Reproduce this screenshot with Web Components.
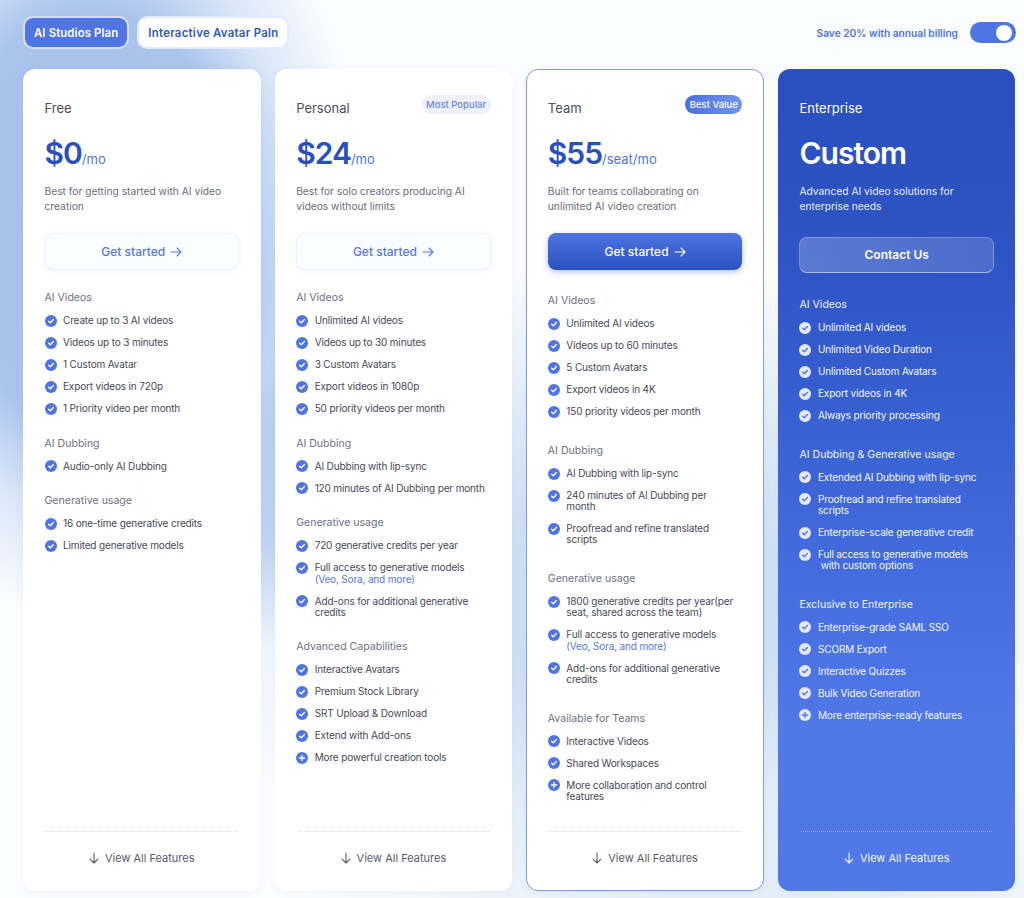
<!DOCTYPE html>
<html lang="en">
<head>
<meta charset="utf-8">
<title>Pricing</title>
<style>
html, body { margin: 0; padding: 0; height: 898px; overflow: hidden; }
body {
  font-family: "Inter", "Liberation Sans", sans-serif;
  background-color: #fbfcfe;
  background-image:
    radial-gradient(ellipse 275px 400px at 90px 220px, #a6c1eb 0%, #a9c3ec 52%, rgba(200,218,245,.65) 74%, rgba(251,252,254,0) 100%),
    radial-gradient(ellipse 130px 230px at 270px 420px, #adc6ec 0%, rgba(173,198,236,.7) 55%, rgba(251,252,254,0) 100%),
    radial-gradient(ellipse 430px 340px at 630px 600px, #c9dcf2 0%, #cfe0f3 35%, rgba(251,252,254,0) 100%),
    radial-gradient(ellipse 500px 120px at 800px 898px, #e6eff8 0%, rgba(251,252,254,0) 100%);
}
</style>
</head>
<body>
<pricing-page>
  <plan-tabs slot="header">
    <plan-tab active>AI Studios Plan</plan-tab>
    <plan-tab>Interactive Avatar Paln</plan-tab>
  </plan-tabs>
  <billing-toggle slot="header">Save 20% with annual billing</billing-toggle>

  <plan-card name="Free" price="$0" unit="/mo" cta="Get started">
    <span slot="desc">Best for getting started with AI video creation</span>
    <feature-group title="AI Videos">
      <feature-item>Create up to 3 AI videos</feature-item>
      <feature-item>Videos up to 3 minutes</feature-item>
      <feature-item>1 Custom Avatar</feature-item>
      <feature-item>Export videos in 720p</feature-item>
      <feature-item>1 Priority video per month</feature-item>
    </feature-group>
    <feature-group title="AI Dubbing">
      <feature-item>Audio-only AI Dubbing</feature-item>
    </feature-group>
    <feature-group title="Generative usage">
      <feature-item>16 one-time generative credits</feature-item>
      <feature-item>Limited generative models</feature-item>
    </feature-group>
  </plan-card>

  <plan-card name="Personal" price="$24" unit="/mo" cta="Get started" badge="Most Popular">
    <span slot="desc">Best for solo creators producing AI videos without limits</span>
    <feature-group title="AI Videos">
      <feature-item>Unlimited AI videos</feature-item>
      <feature-item>Videos up to 30 minutes</feature-item>
      <feature-item>3 Custom Avatars</feature-item>
      <feature-item>Export videos in 1080p</feature-item>
      <feature-item>50 priority videos per month</feature-item>
    </feature-group>
    <feature-group title="AI Dubbing">
      <feature-item>AI Dubbing with lip-sync</feature-item>
      <feature-item>120 minutes of AI Dubbing per month</feature-item>
    </feature-group>
    <feature-group title="Generative usage">
      <feature-item>720 generative credits per year</feature-item>
      <feature-item>Full access to generative models<br><plan-note>(Veo, Sora, and more)</plan-note></feature-item>
      <feature-item>Add-ons for additional generative<br>credits</feature-item>
    </feature-group>
    <feature-group title="Advanced Capabilities">
      <feature-item>Interactive Avatars</feature-item>
      <feature-item>Premium Stock Library</feature-item>
      <feature-item>SRT Upload &amp; Download</feature-item>
      <feature-item>Extend with Add-ons</feature-item>
      <feature-item icon="plus">More powerful creation tools</feature-item>
    </feature-group>
  </plan-card>

  <plan-card tone="team" name="Team" price="$55" unit="/seat/mo" cta="Get started" badge="Best Value">
    <span slot="desc">Built for teams collaborating on unlimited AI video creation</span>
    <feature-group title="AI Videos">
      <feature-item>Unlimited AI videos</feature-item>
      <feature-item>Videos up to 60 minutes</feature-item>
      <feature-item>5 Custom Avatars</feature-item>
      <feature-item>Export videos in 4K</feature-item>
      <feature-item>150 priority videos per month</feature-item>
    </feature-group>
    <feature-group title="AI Dubbing">
      <feature-item>AI Dubbing with lip-sync</feature-item>
      <feature-item>240 minutes of AI Dubbing per<br>month</feature-item>
      <feature-item>Proofread and refine translated<br>scripts</feature-item>
    </feature-group>
    <feature-group title="Generative usage">
      <feature-item>1800 generative credits per year(per<br>seat, shared across the team)</feature-item>
      <feature-item>Full access to generative models<br><plan-note>(Veo, Sora, and more)</plan-note></feature-item>
      <feature-item>Add-ons for additional generative<br>credits</feature-item>
    </feature-group>
    <feature-group title="Available for Teams">
      <feature-item>Interactive Videos</feature-item>
      <feature-item>Shared Workspaces</feature-item>
      <feature-item icon="plus">More collaboration and control<br>features</feature-item>
    </feature-group>
  </plan-card>

  <plan-card tone="enterprise" name="Enterprise" price="Custom" cta="Contact Us">
    <span slot="desc">Advanced AI video solutions for enterprise needs</span>
    <feature-group title="AI Videos">
      <feature-item>Unlimited AI videos</feature-item>
      <feature-item>Unlimited Video Duration</feature-item>
      <feature-item>Unlimited Custom Avatars</feature-item>
      <feature-item>Export videos in 4K</feature-item>
      <feature-item>Always priority processing</feature-item>
    </feature-group>
    <feature-group title="AI Dubbing &amp; Generative usage">
      <feature-item>Extended AI Dubbing with lip-sync</feature-item>
      <feature-item>Proofread and refine translated<br>scripts</feature-item>
      <feature-item>Enterprise-scale generative credit</feature-item>
      <feature-item>Full access to generative models<br>&nbsp;with custom options</feature-item>
    </feature-group>
    <feature-group title="Exclusive to Enterprise">
      <feature-item>Enterprise-grade SAML SSO</feature-item>
      <feature-item>SCORM Export</feature-item>
      <feature-item>Interactive Quizzes</feature-item>
      <feature-item>Bulk Video Generation</feature-item>
      <feature-item icon="plus">More enterprise-ready features</feature-item>
    </feature-group>
  </plan-card>
</pricing-page>

<script>
const ARROW_RIGHT = '<svg width="12" height="12" viewBox="0 0 12 12" fill="none" stroke="currentColor" stroke-width="1.1" stroke-linecap="round" stroke-linejoin="round"><path d="M1 6h10M7 2l4 4-4 4"/></svg>';
const ARROW_DOWN = '<svg width="10" height="12" viewBox="0 0 10 12" fill="none" stroke="currentColor" stroke-width="1.1" stroke-linecap="round" stroke-linejoin="round"><path d="M5 1v10M1.2 7.2 5 11l3.8-3.8"/></svg>';

class PricingPage extends HTMLElement {
  constructor() {
    super();
    this.attachShadow({ mode: 'open' }).innerHTML = `
      <style>
        :host { display: block; padding: 16px 8px 0 23px; }
        header { display: flex; justify-content: space-between; align-items: flex-start; height: 33px; margin-bottom: 20px; }
        main { display: grid; grid-template-columns: repeat(4, 237.5px); column-gap: 14.17px; height: 822px; }
      </style>
      <header><slot name="header"></slot></header>
      <main><slot></slot></main>`;
  }
}

class PlanTabs extends HTMLElement {
  constructor() {
    super();
    this.attachShadow({ mode: 'open' }).innerHTML = `
      <style>:host { display: flex; gap: 8px; }</style><slot></slot>`;
  }
}

class PlanTab extends HTMLElement {
  constructor() {
    super();
    this.attachShadow({ mode: 'open' }).innerHTML = `
      <style>
        :host {
          display: flex; align-items: center; height: 29px; padding: 0 9px; border: 2px solid #e2e9fb;
          border-radius: 10px; background: #fff; color: #2f56c8;
          font-size: 11.3px; font-weight: 600; letter-spacing: .32px; white-space: nowrap;
        }
        :host([active]) { background: #4f75e5; background-clip: padding-box; color: #fff; border-color: #d5e0f8; letter-spacing: .15px; }
      </style><slot></slot>`;
  }
}

class BillingToggle extends HTMLElement {
  constructor() {
    super();
    this.attachShadow({ mode: 'open' }).innerHTML = `
      <style>
        :host { display: flex; align-items: center; gap: 12px; height: 21px; margin-top: 6px; color: #4f75e5; font-size: 10.2px; font-weight: 600; white-space: nowrap; }
        .track { width: 46px; height: 21px; border-radius: 11px; background: #4f75e5; display: flex; align-items: center; justify-content: flex-end; padding-right: 4px; box-sizing: border-box; }
        .knob { width: 16px; height: 16px; border-radius: 50%; background: #fff; }
      </style>
      <span><slot></slot></span><div class="track"><div class="knob"></div></div>`;
  }
}

class PlanCard extends HTMLElement {
  constructor() {
    super();
    const a = n => this.getAttribute(n) || '';
    const isContact = a('tone') === 'enterprise';
    this.attachShadow({ mode: 'open' }).innerHTML = `
      <style>
        :host {
          --group-gap: 22.25px;
          display: flex; flex-direction: column; box-sizing: border-box; height: 822px;
          padding: 30px 21.5px 0; border-radius: 12px; background: #fff; color: #484858;
          box-shadow: 0 2px 10px rgba(60,90,170,.05);
        }
        :host([tone=team]) { --group-gap: 26.4px; padding: 29px 20.5px 0; border: 1px solid #7f9cec; }
        :host([tone=enterprise]) {
          --group-gap: 26px; --title: #eef2fd; --text: #f3f6ff; --desc: #e6ecfc; --name: #fff;
          --price: #fff; --icon-bg: #e3e9fb; --icon-fg: #4f75e5; --line: #8ea7ee;
          background: linear-gradient(180deg, #2a4fbe 0%, #2f55c6 25%, #456de0 62%, #5078e7 80%, #5078e7 100%);
          color: #fff;
        }
        .top { display: flex; justify-content: space-between; align-items: flex-start; height: 18px; }
        .name { font-size: 13px; line-height: 18px; color: var(--name, #4d4d5e); }
        .badge {
          margin-top: -4px; padding: 0 4.5px; height: 19px; line-height: 19px; border-radius: 10px;
          background: #f0f0fb; color: #6a87e8; font-size: 9.5px; font-weight: 500; white-space: nowrap;
        }
        :host([tone=team]) .badge { background: linear-gradient(90deg, #4a70e2, #7394ec); color: #fff; }
        .price { display: flex; align-items: baseline; height: 40px; line-height: 40px; margin-top: 16px; color: var(--price, #2a50c0); font-size: 30px; font-weight: 600; letter-spacing: -1px; }
        .unit { font-size: 13px; font-weight: 400; color: #4f75e5; letter-spacing: 0; }
        .desc { margin-top: 11px; font-size: 10.25px; line-height: 15px; height: 30px; color: var(--desc, #6b6b7c); }
        .cta {
          display: flex; align-items: center; justify-content: center; gap: 5px; box-sizing: border-box;
          height: 37px; margin-top: 19px; border-radius: 8px; border: 1px solid #f1f3fa; background: #fbfcff;
          color: #5478e8; font-size: 12px; font-weight: 500;
          box-shadow: 0 1px 4px rgba(80,110,200,.08);
        }
        :host([tone=team]) .cta {
          border: 0; background: linear-gradient(180deg, #4e74e2, #2c51c0); color: #fff;
          box-shadow: 0 2px 6px rgba(50,85,195,.35);
        }
        :host([tone=enterprise]) .cta {
          height: 36px; margin-top: 23px; padding-bottom: 1px; color: #fff; font-weight: 600;
          background: linear-gradient(90deg, rgba(255,255,255,.22), rgba(255,255,255,.14));
          border: 1px solid rgba(255,255,255,.22); border-bottom-color: rgba(255,255,255,.5); box-shadow: none;
        }
        .features { display: flex; flex-direction: column; gap: var(--group-gap); margin-top: 21px; }
        :host([tone=team]) .features { margin-top: 24.1px; }
        :host([tone=enterprise]) .features { margin-top: 25.3px; }
        footer { display: flex; flex-direction: column; margin-top: auto; height: 60px; }
        :host([tone=team]) footer { height: 59px; }
        .rule { margin: 0 1.5px; border-top: 1px dotted var(--line, #d9dce6); }
        .all {
          display: flex; align-items: center; justify-content: center; gap: 6px; flex: 1; padding-bottom: 8px;
          font-size: 11px; color: var(--text, #5a5a6a);
        }
        :host([tone=team]) .all { padding-bottom: 6px; }
      </style>
      <div class="top">
        <span class="name">${a('name')}</span>
        ${a('badge') ? `<span class="badge">${a('badge')}</span>` : ''}
      </div>
      <div class="price">${a('price')}${a('unit') ? `<span class="unit">${a('unit')}</span>` : ''}</div>
      <div class="desc"><slot name="desc"></slot></div>
      <div class="cta">${a('cta')}${isContact ? '' : ARROW_RIGHT}</div>
      <div class="features"><slot></slot></div>
      <footer>
        <div class="rule"></div>
        <div class="all">${ARROW_DOWN}View All Features</div>
      </footer>`;
  }
}

class FeatureGroup extends HTMLElement {
  constructor() {
    super();
    this.attachShadow({ mode: 'open' }).innerHTML = `
      <style>
        :host { display: flex; flex-direction: column; gap: 10.75px; }
        h4 { margin: 0 0 -.65px; font-size: 10.55px; line-height: 14px; font-weight: 400; color: var(--title, #6f6f86); }
      </style>
      <h4>${this.getAttribute('title')}</h4><slot></slot>`;
  }
}

class FeatureItem extends HTMLElement {
  constructor() {
    super();
    const plus = this.getAttribute('icon') === 'plus';
    const mark = plus
      ? '<path d="M6 3.4v5.2M3.4 6h5.2"/>'
      : '<path d="M3.6 6.2 5.3 7.8l3.1-3.3"/>';
    this.attachShadow({ mode: 'open' }).innerHTML = `
      <style>
        :host { display: grid; grid-template-columns: 12px 1fr; column-gap: 6.5px; font-size: 10px; letter-spacing: -.15px; line-height: 11.25px; color: var(--text, #484858); }
        svg { display: block; margin: -.375px 0; }
        circle { fill: var(--icon-bg, #4f75e5); }
        path { fill: none; stroke: var(--icon-fg, #fff); stroke-width: 1.3; stroke-linecap: round; stroke-linejoin: round; }
      </style>
      <svg width="12" height="12" viewBox="0 0 12 12"><circle cx="6" cy="6" r="6"/>${mark}</svg>
      <span><slot></slot></span>`;
  }
}

class PlanNote extends HTMLElement {
  constructor() {
    super();
    this.attachShadow({ mode: 'open' }).innerHTML = `
      <style>:host { color: #5478e8; }</style><slot></slot>`;
  }
}

customElements.define('pricing-page', PricingPage);
customElements.define('plan-tabs', PlanTabs);
customElements.define('plan-tab', PlanTab);
customElements.define('billing-toggle', BillingToggle);
customElements.define('plan-card', PlanCard);
customElements.define('feature-group', FeatureGroup);
customElements.define('feature-item', FeatureItem);
customElements.define('plan-note', PlanNote);
</script>
</body>
</html>
